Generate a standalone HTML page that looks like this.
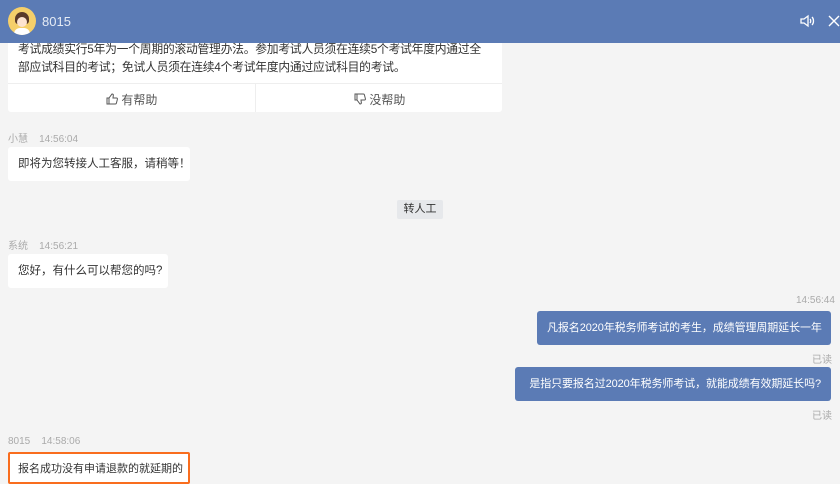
<!DOCTYPE html>
<html><head><meta charset="utf-8"><style>
*{margin:0;padding:0;box-sizing:border-box}
body{width:840px;height:481px;overflow:hidden;background:#f4f4f4;font-family:"Liberation Sans","Noto Sans CJK SC",sans-serif;font-size:12px;color:#333;position:relative}
.a{position:absolute;white-space:nowrap}
.hdr{left:0;top:0;width:840px;height:43px;background:#5b7bb5}
.card{background:#fff;border-radius:3px}
.meta{color:#aaa;font-size:10px}
.me{background:#5b7bb5;color:#fff;border-radius:3px;padding:0 10px;line-height:34px;font-size:11px;letter-spacing:-0.1px;text-align:right}
</style></head><body>
<div class="a card" style="left:8px;top:30px;width:494px;height:82px"></div>
<div class="a" style="left:18px;top:40px;line-height:18px;font-size:11.8px;letter-spacing:-0.25px">考试成绩实行5年为一个周期的滚动管理办法。参加考试人员须在连续5个考试年度内通过全<br>部应试科目的考试；免试人员须在连续4个考试年度内通过应试科目的考试。</div>
<div class="a" style="left:8px;top:83px;width:494px;border-top:1px solid #eee"></div>
<div class="a" style="left:255px;top:84px;height:28px;border-left:1px solid #eee"></div>
<div class="a" style="left:106px;top:91px;color:#555">
<svg width="12" height="12" viewBox="0 0 12 12" style="vertical-align:-1px"><path d="M1 5h2v6H1zM3 5l3-4c1 0 1.5.5 1.3 1.5L7 5h3.5c.7 0 1 .5.9 1.2l-1 4c-.2.6-.5.8-1 .8H3" fill="none" stroke="#555" stroke-width="1"/></svg> 有帮助</div>
<div class="a" style="left:354px;top:91px;color:#555">
<svg width="12" height="12" viewBox="0 0 12 12" style="vertical-align:-1px"><path d="M1 1h2v6H1zM3 7l3 4c1 0 1.5-.5 1.3-1.5L7 7h3.5c.7 0 1-.5.9-1.2l-1-4C10.2 1.2 9.900 1 9.4 1H3" fill="none" stroke="#555" stroke-width="1"/></svg> 没帮助</div>
<div class="a hdr"></div>
<div class="a" style="left:8px;top:7px;width:28px;height:28px;border-radius:50%;background:#f5cf6a;overflow:hidden">
<div class="a" style="left:7px;top:5px;width:14px;height:12px;border-radius:7px 7px 3px 3px;background:#5a3a2a"></div>
<div class="a" style="left:9px;top:10px;width:10px;height:10px;border-radius:50%;background:#fde3d0"></div>
<div class="a" style="left:6px;top:21px;width:16px;height:10px;border-radius:6px 6px 0 0;background:#fff"></div>
</div>
<div class="a" style="left:42px;top:14px;color:#e6ecf5;font-size:13px">8015</div>
<svg class="a" style="left:799px;top:14px" width="18" height="14" viewBox="0 0 18 14"><path d="M2 5h3l4-3v10L5 9H2z" fill="none" stroke="#fff" stroke-width="1.3"/><path d="M11 5c1 1 1 3 0 4M13 3c2 2 2 6 0 8" fill="none" stroke="#fff" stroke-width="1.3"/></svg>
<svg class="a" style="left:828px;top:15px" width="12" height="12" viewBox="0 0 12 12"><path d="M1 1l10 10M11 1L1 11" stroke="#fff" stroke-width="1.4"/></svg>
<div class="a meta" style="left:8px;top:130px">小慧&nbsp;&nbsp;&nbsp;&nbsp;14:56:04</div>
<div class="a card" style="left:8px;top:147px;width:182px;height:34px;line-height:34px;padding-left:10px;font-size:11.5px">即将为您转接人工客服，请稍等！</div>
<div class="a" style="left:397px;top:200px;width:46px;height:19px;background:#e6e8eb;border-radius:2px;text-align:center;line-height:19px;font-size:11px">转人工</div>
<div class="a meta" style="left:8px;top:237px">系统&nbsp;&nbsp;&nbsp;&nbsp;14:56:21</div>
<div class="a card" style="left:8px;top:254px;width:160px;height:34px;line-height:34px;padding-left:10px;font-size:11.5px">您好，有什么可以帮您的吗?</div>
<div class="a meta" style="left:796px;top:295px">14:56:44</div>
<div class="a me" style="left:537px;top:311px;width:294px">凡报名2020年税务师考试的考生，成绩管理周期延长一年</div>
<div class="a meta" style="left:812px;top:351px">已读</div>
<div class="a me" style="left:515px;top:367px;width:316px">是指只要报名过2020年税务师考试，就能成绩有效期延长吗?</div>
<div class="a meta" style="left:812px;top:407px">已读</div>
<div class="a meta" style="left:8px;top:436px">8015&nbsp;&nbsp;&nbsp;&nbsp;14:58:06</div>
<div class="a card" style="left:8px;top:452px;width:182px;height:32px;border:2px solid #f96d1e;border-radius:2px;line-height:30px;padding-left:8px;font-size:11px">报名成功没有申请退款的就延期的</div>
</body></html>
